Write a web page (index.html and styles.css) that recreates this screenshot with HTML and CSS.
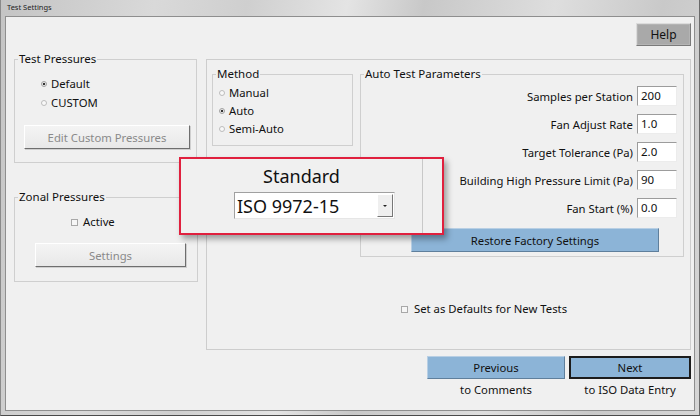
FILE: index.html
```html
<!DOCTYPE html>
<html lang="en">
<head>
<meta charset="utf-8">
<title>Test Settings</title>
<link rel="stylesheet" href="styles.css">
</head>
<body>
<div class="window">
  <div class="titlebar">Test Settings</div>
  <div class="client">
    <div class="toolbar"><button class="btn-help">Help</button></div>
    <div class="main">
      <div class="left-col">
        <fieldset class="group group-pressures">
          <legend>Test Pressures</legend>
          <div class="opt opt-first"><span class="radio checked"></span>Default</div>
          <div class="opt"><span class="radio"></span>CUSTOM</div>
          <button class="btn-3d btn-edit">Edit Custom Pressures</button>
        </fieldset>
        <fieldset class="group group-zonal">
          <legend>Zonal Pressures</legend>
          <div class="opt opt-active"><span class="check"></span>Active</div>
          <button class="btn-3d btn-settings">Settings</button>
        </fieldset>
      </div>
      <div class="panel">
        <div class="panel-top">
          <fieldset class="group group-method">
            <legend>Method</legend>
            <div class="method-list">
              <div class="opt"><span class="radio"></span>Manual</div>
              <div class="opt"><span class="radio checked"></span>Auto</div>
              <div class="opt"><span class="radio"></span>Semi-Auto</div>
            </div>
          </fieldset>
          <fieldset class="group group-auto">
            <legend>Auto Test Parameters</legend>
            <div class="params">
              <div class="param"><span class="param-label">Samples per Station</span><span class="field">200</span></div>
              <div class="param"><span class="param-label">Fan Adjust Rate</span><span class="field">1.0</span></div>
              <div class="param"><span class="param-label">Target Tolerance (Pa)</span><span class="field">2.0</span></div>
              <div class="param"><span class="param-label">Building High Pressure Limit (Pa)</span><span class="field">90</span></div>
              <div class="param"><span class="param-label">Fan Start (%)</span><span class="field">0.0</span></div>
            </div>
            <button class="btn-blue btn-restore">Restore Factory Settings</button>
          </fieldset>
        </div>
        <div class="opt defaults-row"><span class="check"></span>Set as Defaults for New Tests</div>
      </div>
    </div>
    <div class="nav">
      <div class="nav-item nav-prev"><button class="btn-blue">Previous</button><span class="nav-caption">to Comments</span></div>
      <div class="nav-item nav-next"><button class="btn-blue btn-next">Next</button><span class="nav-caption">to ISO Data Entry</span></div>
    </div>
  </div>
  <div class="popup">
    <div class="popup-main">
      <div class="popup-title">Standard</div>
      <div class="combo"><span class="combo-text">ISO 9972-15</span><span class="combo-btn"><span class="combo-arrow"></span></span></div>
    </div>
    <div class="popup-side"></div>
  </div>
</div>
</body>
</html>
```

FILE: styles.css
```css
html, body {
  margin: 0;
  padding: 0;
}
body {
  width: 700px;
  height: 416px;
  overflow: hidden;
  font-family: "Noto Sans", "Open Sans", sans-serif;
  font-size: 11.3px;
  color: #111;
}
.window {
  position: relative;
  width: 700px;
  height: 416px;
  box-sizing: border-box;
  padding: 0 4px 4px 4px;
  display: flex;
  flex-direction: column;
  background: linear-gradient(100deg, #c4c4c4 0%, #d9d9d9 20%, #cfcfcf 32%, #e4e4e4 45%, #c8c8c8 55%, #dedede 72%, #c9c9c9 86%, #d6d6d6 100%);
  border-bottom: 1px solid #4a4a4a;
  border-left: 1px solid #8a8a8a;
  border-right: 1px solid #6a6a6a;
}
.titlebar {
  height: 16px;
  line-height: 15px;
  font-size: 7.5px;
  color: #222;
  padding-left: 2px;
}
.client {
  flex: 1;
  background: #f0f0f0;
  border: 1px solid #8e8e8e;
  padding: 6px 3px 0 8px;
  display: flex;
  flex-direction: column;
}
.toolbar {
  display: flex;
  justify-content: flex-end;
}
button {
  font-family: inherit;
  font-size: 11.3px;
  color: #111;
  margin: 0;
  padding: 0;
  cursor: default;
}
.btn-help {
  width: 55px;
  height: 23px;
  font-size: 12px;
  background: #a9a9a9;
  border: 1px solid #dcdcdc;
  border-right-color: #7a7a7a;
  border-bottom-color: #7a7a7a;
  box-shadow: inset 0 0 0 1px #b4b4b4;
}
.main {
  display: flex;
  align-items: flex-start;
  margin-top: 6px;
}
.left-col {
  width: 183px;
  display: flex;
  flex-direction: column;
}
.group {
  margin: 0;
  padding: 0;
  min-width: 0;
  border: 1px solid #cfcfcf;
  box-sizing: border-box;
}
.group legend {
  margin-left: 3px;
  padding: 0 1px;
  font-size: 11.5px;
  line-height: 14px;
  color: #111;
}
.opt {
  display: flex;
  align-items: center;
  height: 16px;
  line-height: 16px;
}
.radio {
  width: 4px;
  height: 4px;
  border: 1px solid #bcbcbc;
  border-radius: 50%;
  margin-right: 4px;
  background: #f8f8f8;
  flex: none;
}
.radio.checked {
  background: radial-gradient(circle, #333 0 1.2px, #eee 1.6px);
  border-color: #a0a0a0;
}
.check {
  width: 5px;
  height: 5px;
  border: 1px solid #a8a8a8;
  background: #f6f6f6;
  margin-right: 5px;
  flex: none;
}
.group-pressures {
  padding-bottom: 13px;
}
.group-pressures .opt {
  padding-left: 26px;
  margin-top: 3px;
}
.group-pressures .opt-first {
  margin-top: 10px;
}
.btn-3d {
  height: 24px;
  background: linear-gradient(#f4f4f4, #e8e8e8);
  border: 1px solid #ffffff;
  border-right-color: #6e6e6e;
  border-bottom-color: #6e6e6e;
  box-shadow: 1px 1px 0 #cfcfcf;
  color: #8a8a8a;
}
.btn-edit {
  display: block;
  width: 166px;
  margin: 14px 0 0 9px;
}
.group-zonal {
  margin-top: 27px;
  width: 184px;
  padding-bottom: 14px;
}
.opt-active {
  margin-top: 10px;
  padding-left: 56px;
}
.btn-settings {
  display: block;
  width: 151px;
  margin: 13px 0 0 20px;
}
.panel {
  flex: 1;
  margin-left: 9px;
  margin-top: 7px;
  height: 291px;
  box-sizing: border-box;
  border: 1px solid #cdcdcd;
}
.panel-top {
  display: flex;
  align-items: flex-start;
  padding: 7px 6px 0 5px;
}
.group-method {
  width: 141px;
  padding-bottom: 7px;
}
.method-list {
  margin-top: 3px;
  padding-left: 6px;
}
.method-list .opt {
  height: 18px;
  line-height: 18px;
}
.group-auto {
  flex: 1;
  margin-left: 7px;
  padding-bottom: 4px;
}
.params {
  display: flex;
  flex-direction: column;
  gap: 8px;
  margin-top: 5px;
  padding-right: 6px;
}
.param {
  display: flex;
  justify-content: flex-end;
  align-items: center;
  gap: 4px;
  height: 20px;
}
.field {
  width: 40px;
  height: 20px;
  box-sizing: border-box;
  background: #fff;
  border: 1px solid #9c9c9c;
  border-right-color: #ececec;
  border-bottom-color: #ececec;
  padding-left: 3px;
  line-height: 17px;
  font-size: 11.5px;
}
.btn-blue {
  background: #8cb4d7;
  border: 1px solid #b8cfe4;
  border-right-color: #5f7f9c;
  border-bottom-color: #5f7f9c;
}
.btn-restore {
  display: block;
  width: 248px;
  height: 24px;
  margin: 10px 0 0 50px;
}
.defaults-row {
  margin-top: 44px;
  padding-left: 194px;
}
.defaults-row .check {
  margin-right: 6px;
}
.nav {
  display: flex;
  justify-content: flex-end;
  gap: 4px;
  margin-top: 6px;
}
.nav-item {
  display: flex;
  flex-direction: column;
  align-items: center;
}
.nav-item .btn-blue {
  height: 23px;
}
.nav-prev .btn-blue {
  width: 138px;
}
.nav-next .btn-blue {
  width: 122px;
}
.btn-next {
  border: 2px solid #1c1c1c;
}
.nav-caption {
  margin-top: 3px;
  line-height: 16px;
}
.popup {
  position: absolute;
  left: 178px;
  top: 157px;
  width: 265px;
  height: 78px;
  box-sizing: border-box;
  border: 2px solid #e0203e;
  background: #f0f0f0;
  box-shadow: 3px 4px 6px rgba(0, 0, 0, 0.35);
  display: flex;
}
.popup-main {
  width: 241px;
  border-right: 1px solid #c8c8c8;
  display: flex;
  flex-direction: column;
}
.popup-title {
  margin-top: 7px;
  text-align: center;
  font-size: 18px;
  line-height: 20px;
}
.combo {
  margin: 6px 0 0 53px;
  width: 161px;
  height: 27px;
  box-sizing: border-box;
  background: #fff;
  border: 1px solid #a0a0a0;
  border-right-color: #e6e6e6;
  border-bottom-color: #e6e6e6;
  display: flex;
  align-items: center;
}
.combo-text {
  flex: 1;
  font-size: 18px;
  line-height: 24px;
  padding-left: 2px;
}
.combo-btn {
  width: 16px;
  height: 23px;
  box-sizing: border-box;
  margin-right: 1px;
  background: #efefef;
  border: 1px solid #fff;
  border-right-color: #777;
  border-bottom-color: #777;
  display: flex;
  align-items: center;
  justify-content: center;
}
.combo-arrow {
  width: 0;
  height: 0;
  border-left: 2px solid transparent;
  border-right: 2px solid transparent;
  border-top: 2px solid #222;
}
```
